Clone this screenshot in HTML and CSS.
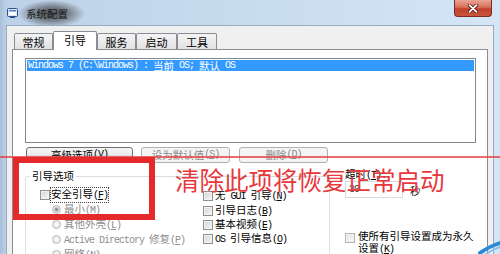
FILE: index.html
```html
<!DOCTYPE html>
<html lang="zh-CN">
<head>
<meta charset="utf-8">
<title>系统配置</title>
<link rel="stylesheet" href="styles.css">
</head>
<body>
<div class="window">
  <div class="titlebar">
    <svg class="app-icon" viewBox="0 0 11 10" width="11" height="10">
      <rect x="0.5" y="0.5" width="10" height="8" rx="1" fill="#d9e8f7" stroke="#2d4f8f"/>
      <rect x="2" y="2" width="7" height="5" fill="#ffffff"/>
      <rect x="2" y="2" width="7" height="1.5" fill="#4f7fc4"/>
      <rect x="3" y="9" width="5" height="1" fill="#2d4f8f"/>
    </svg>
    <span class="title">系统配置</span>
    <div class="close">
      <svg viewBox="0 0 12 9" width="12" height="9">
        <path d="M2.5 1.2 L9.5 7.8 M9.5 1.2 L2.5 7.8" stroke="#5a1a12" stroke-width="3.4" stroke-linecap="round"/>
        <path d="M2.5 1.2 L9.5 7.8 M9.5 1.2 L2.5 7.8" stroke="#ffffff" stroke-width="1.8" stroke-linecap="round"/>
      </svg>
    </div>
  </div>
  <div class="client">
    <div class="tabs">
      <div class="tab w1">常规</div>
      <div class="tab sel">引导</div>
      <div class="tab w3">服务</div>
      <div class="tab w4">启动</div>
      <div class="tab w5">工具</div>
    </div>
    <div class="panel">
      <div class="listbox">
        <div class="sel-row"><span class="m">Windows 7 (C:\Windows) : </span>当前<span class="m"> OS; </span>默认<span class="m"> OS</span></div>
      </div>
      <div class="buttons">
        <div class="btn b1">高级选项<span class="m">(<u>V</u>)</span></div>
        <div class="btn b2 dis">设为默认值<span class="m">(<u>S</u>)</span></div>
        <div class="btn b3 dis">删除<span class="m">(<u>D</u>)</span></div>
      </div>
      <div class="lower">
        <fieldset class="group">
          <legend>引导选项</legend>
          <div class="cols">
            <div class="col left">
              <div class="item"><span class="cb"></span><span class="lbl focus">安全引导<span class="m">(<u>F</u>)</span></span></div>
              <div class="item sub dis"><span class="rb on"></span><span class="lbl">最小<span class="m">(<u>M</u>)</span></span></div>
              <div class="item sub dis"><span class="rb"></span><span class="lbl">其他外壳<span class="m">(<u>L</u>)</span></span></div>
              <div class="item sub dis"><span class="rb"></span><span class="lbl"><span class="m">Active Directory </span>修复<span class="m">(<u>P</u>)</span></span></div>
              <div class="item sub dis"><span class="rb"></span><span class="lbl">网络<span class="m">(<u>N</u>)</span></span></div>
            </div>
            <div class="col right">
              <div class="item"><span class="cb"></span><span class="lbl">无<span class="m"> GUI </span>引导<span class="m">(<u>N</u>)</span></span></div>
              <div class="item"><span class="cb"></span><span class="lbl">引导日志<span class="m">(<u>B</u>)</span></span></div>
              <div class="item"><span class="cb"></span><span class="lbl">基本视频<span class="m">(<u>E</u>)</span></span></div>
              <div class="item"><span class="cb"></span><span class="lbl"><span class="m">OS </span>引导信息<span class="m">(<u>O</u>)</span></span></div>
            </div>
          </div>
        </fieldset>
        <div class="side">
          <div class="timeout-label">超时<span class="m">(<u>T</u>):</span></div>
          <div class="timeout-row">
            <div class="input"><span class="m">30</span></div>
            <span class="unit">秒</span>
          </div>
          <div class="perm">
            <span class="cb light"></span>
            <span class="perm-lbl">使所有引导设置成为永久<br>设置<span class="m">(<u>K</u>)</span></span>
          </div>
        </div>
      </div>
    </div>
  </div>

  <div class="redline"></div>
  <div class="redbox"></div>
  <div class="note">清除此项将恢复正常启动</div>
  <svg class="swoosh" viewBox="0 0 22 14" width="22" height="14">
    <path d="M0 14 L4 14 Q12 8 22 5 L22 1 Q10 5 0 12 Z" fill="#2b8ad6"/>
    <path d="M6 14 L10 14 Q16 10 22 8 L22 6 Q14 9 6 14 Z" fill="#7fc0ee"/>
  </svg>
</div>
</body>
</html>
```
FILE: styles.css
```css
* {
  box-sizing: border-box;
  margin: 0;
  padding: 0;
}

html, body {
  width: 500px;
  height: 254px;
  overflow: hidden;
}

body {
  font-family: "Noto Sans CJK SC", "Noto Sans", sans-serif;
  font-size: 10.5px;
  color: #000;
  background: #c6d9ed;
}

.m {
  font-family: "Liberation Mono", "DejaVu Sans Mono", monospace;
  font-size: 10px;
  letter-spacing: -1px;
}

u {
  text-decoration: underline;
  text-underline-offset: 1px;
}

.window {
  position: relative;
  width: 500px;
  height: 254px;
  padding: 0 6px;
  background: linear-gradient(90deg, #a9bfd8 0, #bcd1e8 6px, #c6daee 40%, #d4e6f6 100%);
  overflow: hidden;
}

.titlebar {
  height: 25px;
  display: flex;
  align-items: flex-start;
}

.app-icon {
  margin: 8px 0 0 1px;
  flex: none;
}

.title {
  height: 25px;
  padding: 3px 17px 0 8px;
  display: flex;
  align-items: center;
  line-height: 1;
  font-size: 10.5px;
  color: #161616;
  background: radial-gradient(ellipse 50% 55% at 50% 55%, rgba(60, 60, 60, 0.9) 0%, rgba(90, 95, 100, 0.65) 55%, rgba(150, 165, 180, 0) 100%);
}

.close {
  margin-left: auto;
  margin-right: 2px;
  width: 38px;
  height: 17px;
  border: 1px solid #7a2a20;
  border-top: none;
  border-radius: 0 0 4px 4px;
  background: linear-gradient(#e9a595 0%, #d8705a 45%, #c4402b 55%, #c8553d 100%);
  display: flex;
  align-items: center;
  justify-content: center;
}

.client {
  height: 229px;
  background: #f0f0f0;
  border: 1px solid #97abc1;
  border-bottom: none;
  padding: 5px 5px 0;
}

.tabs {
  display: flex;
  align-items: flex-end;
  height: 19px;
  margin-left: 2px;
  margin-bottom: -1px;
  position: relative;
  z-index: 1;
}

.tab {
  height: 16px;
  margin-bottom: 1px;
  border: 1px solid #898c95;
  border-bottom: none;
  border-radius: 2px 2px 0 0;
  background: linear-gradient(#f4f4f4, #e2e2e2);
  display: flex;
  align-items: center;
  justify-content: center;
  line-height: 1;
  font-size: 11px;
  padding-top: 1px;
}

.w1 { width: 39px; }
.w3 { width: 39px; }
.w4 { width: 41px; }
.w5 { width: 40px; }

.tab.sel {
  width: 44px;
  height: 19px;
  margin-bottom: 0;
  background: #fff;
  padding-bottom: 2px;
}

.panel {
  height: 300px;
  background: #fff;
  border: 1px solid #898c95;
  padding: 8px 10px 0 12px;
}

.listbox {
  width: 451px;
  height: 85px;
  border: 1px solid #828790;
  padding: 1px;
  background: #fff;
}

.sel-row {
  height: 11px;
  background: #3399ff;
  color: #fff;
  display: flex;
  align-items: center;
  padding-left: 1px;
  line-height: 11px;
  white-space: pre;
}

.buttons {
  display: flex;
  margin-top: 4px;
  margin-left: 1px;
  height: 16px;
}

.btn {
  height: 16px;
  border: 1px solid #707070;
  border-radius: 3px;
  background: linear-gradient(#f4f4f4 0%, #ececec 50%, #dedede 51%, #d2d2d2 100%);
  display: flex;
  align-items: center;
  justify-content: center;
  line-height: 1;
  white-space: nowrap;
}

.b1 { width: 107px; }
.b2 { width: 89px; margin-left: 8px; }
.b3 { width: 89px; margin-left: 9px; }

.btn.dis {
  border-color: #adb2b5;
  background: #f4f4f4;
  color: #8a8a8a;
}

.lower {
  display: flex;
  align-items: flex-start;
}

.group {
  width: 305px;
  height: 120px;
  margin-top: 7px;
  border: 1px solid #d5dfe5;
  border-radius: 3px;
  padding: 5px 0 0 14px;
  min-width: 0;
}

.group legend {
  padding: 0 2px;
  margin-left: -10px;
  line-height: 12px;
  font-size: 10.5px;
}

.cols {
  display: flex;
}

.col.left {
  width: 163px;
}

.col.right {
  padding-top: 2px;
}

.item {
  height: 15px;
  display: flex;
  align-items: center;
  white-space: nowrap;
  line-height: 12px;
}

.col.right .item {
  height: 14.4px;
}

.item.sub {
  padding-left: 12px;
}

.item.dis {
  color: #8d8d8d;
}

.cb {
  width: 10px;
  height: 10px;
  flex: none;
  border: 1px solid #8e8f8f;
  background: linear-gradient(135deg, #d4d4d4, #f7f7f7);
  box-shadow: inset 0 0 0 1px #f2f2f2;
  margin-right: 1px;
}

.col.right .cb {
  margin-right: 2px;
}

.cb.light {
  border-color: #b3b3b3;
  background: linear-gradient(135deg, #e2e2e2, #f8f8f8);
}

.rb {
  width: 9px;
  height: 9px;
  flex: none;
  border-radius: 50%;
  border: 1px solid #b8b8b8;
  background: radial-gradient(circle, #fbfbfb 0, #e0e0e0 100%);
  margin-right: 3px;
}

.rb.on {
  background: radial-gradient(circle, #8c8c8c 0, #a5a5a5 1.6px, #e6e6e6 2.6px, #f4f4f4 100%);
}

.lbl.focus {
  outline: 1px dotted #444;
  outline-offset: 0;
}

.side {
  margin-left: 15px;
  padding-top: 5px;
}

.timeout-label {
  line-height: 12px;
  height: 12px;
}

.timeout-row {
  display: flex;
  align-items: center;
  margin-top: 1px;
}

.input {
  width: 58px;
  height: 17px;
  border: 1px solid #d3d9e0;
  background: #fff;
  display: flex;
  align-items: center;
  padding-left: 3px;
  color: #333;
}

.unit {
  margin-left: 7px;
  line-height: 12px;
  padding-top: 2px;
}

.perm {
  display: flex;
  align-items: flex-start;
  margin-top: 32px;
}

.perm .cb {
  margin-top: 3px;
  margin-right: 3px;
}

.perm-lbl {
  line-height: 12px;
  white-space: nowrap;
}

.redline {
  position: absolute;
  left: 0;
  top: 156px;
  width: 500px;
  height: 2px;
  background: rgba(226, 72, 72, 0.8);
}

.redbox {
  position: absolute;
  left: 13px;
  top: 157px;
  width: 142px;
  height: 63px;
  border: 6px solid #e62a2c;
}

.note {
  position: absolute;
  left: 175px;
  top: 167px;
  font-size: 24.5px;
  line-height: 25px;
  color: #e8383c;
  white-space: nowrap;
  font-family: "Noto Sans CJK SC", sans-serif;
  font-weight: 400;
}

.swoosh {
  position: absolute;
  right: 0;
  bottom: 0;
}
```
